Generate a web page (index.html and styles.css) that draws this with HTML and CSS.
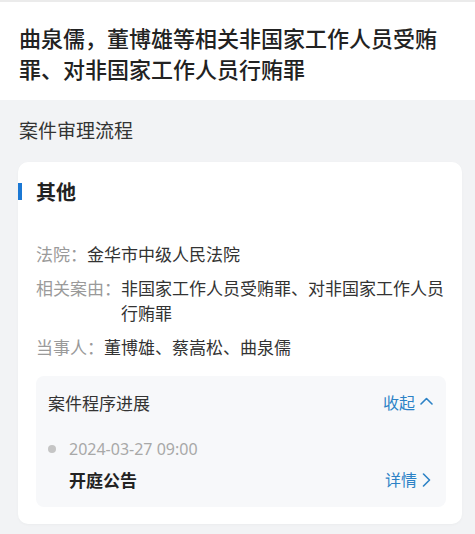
FILE: index.html
```html
<!DOCTYPE html>
<html lang="zh-CN">
<head>
<meta charset="utf-8">
<title>案件审理流程</title>
<link rel="stylesheet" href="styles.css">
</head>
<body>
<div class="page">
  <header class="head">
    <h1 class="title">曲泉儒，董博雄等相关非国家工作人员受贿罪、对非国家工作人员行贿罪</h1>
  </header>
  <section class="section">
    <h2 class="section-title">案件审理流程</h2>
    <div class="card">
      <div class="card-head"><span class="bar"></span><span class="card-title">其他</span></div>
      <div class="rows">
        <div class="row"><span class="label">法院：</span><span class="value">金华市中级人民法院</span></div>
        <div class="row"><span class="label">相关案由：</span><span class="value">非国家工作人员受贿罪、对非国家工作人员行贿罪</span></div>
        <div class="row"><span class="label">当事人：</span><span class="value">董博雄、蔡嵩松、曲泉儒</span></div>
      </div>
      <div class="progress">
        <div class="progress-head">
          <span class="progress-title">案件程序进展</span>
          <span class="link">收起<svg class="chev-up" width="13" height="8" viewBox="0 0 13 8"><path d="M1 7 L6.5 1.5 L12 7" fill="none" stroke="currentColor" stroke-width="1.6" stroke-linecap="round" stroke-linejoin="round"/></svg></span>
        </div>
        <div class="event">
          <div class="event-time"><span class="dot"></span><span class="time">2024-03-27 09:00</span></div>
          <div class="event-main">
            <span class="event-name">开庭公告</span>
            <span class="link">详情<svg class="chev-right" width="10" height="14" viewBox="0 0 10 14"><path d="M1.5 1 L7.5 7 L1.5 13" fill="none" stroke="currentColor" stroke-width="1.6" stroke-linecap="round" stroke-linejoin="round"/></svg></span>
          </div>
        </div>
      </div>
    </div>
  </section>
</div>
</body>
</html>
```

FILE: styles.css
```css
* { box-sizing: border-box; }
html, body { margin: 0; padding: 0; }
body {
  font-family: "Noto Sans CJK SC", "Noto Sans", sans-serif;
  background: #f2f3f5;
  color: #333;
}
.page {
  width: 475px;
  min-height: 534px;
  background: #f2f3f5;
  border-top: 2px solid #ebebeb;
}
.head {
  background: #fff;
  padding: 20px 19px 16px 19px;
}
.title {
  margin: 0;
  font-size: 22px;
  line-height: 31px;
  font-weight: 500;
  color: #222;
}
.section {
  padding: 17px 13px 9px 18px;
}
.section-title {
  margin: 0 0 19px 1px;
  font-size: 19px;
  line-height: 26px;
  font-weight: 400;
  color: #333;
}
.card {
  background: #fff;
  border-radius: 10px;
  padding: 16px 16px 17px 18px;
  box-shadow: 0 1px 3px rgba(0,0,0,0.03);
}
.card-head {
  display: flex;
  align-items: center;
  margin-left: -18px;
  height: 28px;
}
.bar {
  width: 4px;
  height: 17px;
  background: #1b78d4;
  margin-right: 14px;
  margin-top: -2px;
}
.card-title {
  font-size: 20px;
  line-height: 28px;
  font-weight: 700;
  color: #222;
}
.rows {
  margin-top: 35px;
  display: flex;
  flex-direction: column;
  gap: 9px;
}
.row {
  display: flex;
  font-size: 17px;
  line-height: 25px;
}
.label {
  color: #9a9a9a;
  flex: none;
  white-space: nowrap;
}
.value {
  color: #333;
  flex: 1;
  margin-right: -2px;
}
.progress {
  margin-top: 17px;
  background: #f7f8fa;
  border-radius: 8px;
  padding: 14px 13px 15px 12px;
}
.progress-head {
  display: flex;
  justify-content: space-between;
  align-items: center;
  font-size: 17px;
  line-height: 25px;
}
.progress-title { color: #333; }
.link {
  color: #2c82c6;
  font-size: 16px;
  line-height: 25px;
  display: inline-flex;
  align-items: center;
}
.chev-up { margin-left: 5px; margin-top: -3px; }
.chev-right { margin-left: 5px; margin-right: 1px; }
.event {
  margin-top: 23px;
}
.event-time {
  display: flex;
  align-items: center;
  height: 22px;
}
.dot {
  width: 8px;
  height: 8px;
  border-radius: 50%;
  background: #c5c5c5;
  margin-right: 13px;
}
.time {
  font-family: "Noto Sans", "Noto Sans CJK SC", sans-serif;
  font-size: 16px;
  line-height: 22px;
  color: #a8a8a8;
}
.event-main {
  margin-top: 7px;
  padding-left: 21px;
  display: flex;
  justify-content: space-between;
  align-items: center;
}
.event-name {
  font-size: 17px;
  line-height: 25px;
  font-weight: 700;
  color: #222;
}
```
